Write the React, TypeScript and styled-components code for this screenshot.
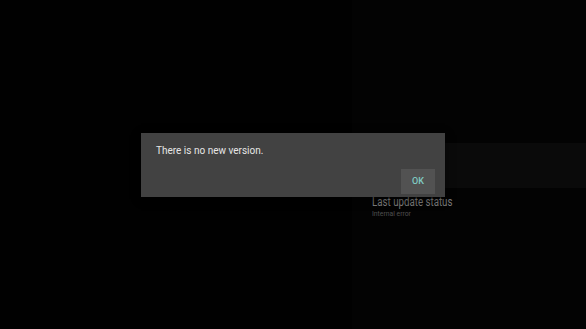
import styled, { createGlobalStyle } from "styled-components";

const GlobalStyle = createGlobalStyle`
  html, body {
    margin: 0;
    padding: 0;
    background: #010101;
  }
  body {
    font-family: Roboto, "Noto Sans", sans-serif;
  }
`;

const Screen = styled.div`
  position: relative;
  width: 586px;
  height: 329px;
  display: flex;
  overflow: hidden;
  background: #010101;
`;

const Spacer = styled.div`
  flex: 1;
`;

const SidePanel = styled.aside`
  width: 234px;
  padding-top: 143px;
  display: flex;
  flex-direction: column;
  background: #030303;
`;

const ListItem = styled.div<{ $focused?: boolean }>`
  height: ${(p) => (p.$focused ? "45px" : "auto")};
  padding: ${(p) => (p.$focused ? "0" : "7px 20px")};
  background: ${(p) => (p.$focused ? "#0a0a0a" : "transparent")};
  display: flex;
  flex-direction: column;
`;

const ItemTitle = styled.span`
  display: inline-block;
  font-size: 12px;
  line-height: 14px;
  color: #7a7a7a;
  transform: scaleX(0.81);
  transform-origin: left center;
  white-space: nowrap;
`;

const ItemSub = styled.span`
  display: inline-block;
  font-size: 8px;
  line-height: 9px;
  color: #505050;
  transform: scaleX(0.85);
  transform-origin: left center;
  white-space: nowrap;
`;

const Scrim = styled.div`
  position: absolute;
  inset: 0;
  display: flex;
  align-items: center;
  justify-content: center;
`;

const Dialog = styled.div`
  width: 304px;
  height: 64px;
  box-sizing: border-box;
  background: #424242;
  padding: 12px 10px 3px 15px;
  display: flex;
  flex-direction: column;
  justify-content: space-between;
  box-shadow: 0 2px 8px rgba(0, 0, 0, 0.5);
`;

const Message = styled.p`
  margin: 0;
  font-size: 10px;
  line-height: 12px;
  color: #e6e6e6;
`;

const Actions = styled.div`
  display: flex;
  justify-content: flex-end;
`;

const DialogButton = styled.button`
  width: 34px;
  height: 25px;
  border: none;
  padding: 0;
  background: #525252;
  color: #80cbc4;
  font-family: Roboto, "Noto Sans", sans-serif;
  font-size: 9px;
  font-weight: 500;
  cursor: pointer;
`;

export default function App() {
  return (
    <>
      <GlobalStyle />
      <Screen>
        <Spacer />
        <SidePanel>
          <ListItem $focused />
          <ListItem>
            <ItemTitle>Last update status</ItemTitle>
            <ItemSub>Internal error</ItemSub>
          </ListItem>
        </SidePanel>
        <Scrim>
          <Dialog>
            <Message>There is no new version.</Message>
            <Actions>
              <DialogButton>OK</DialogButton>
            </Actions>
          </Dialog>
        </Scrim>
      </Screen>
    </>
  );
}
